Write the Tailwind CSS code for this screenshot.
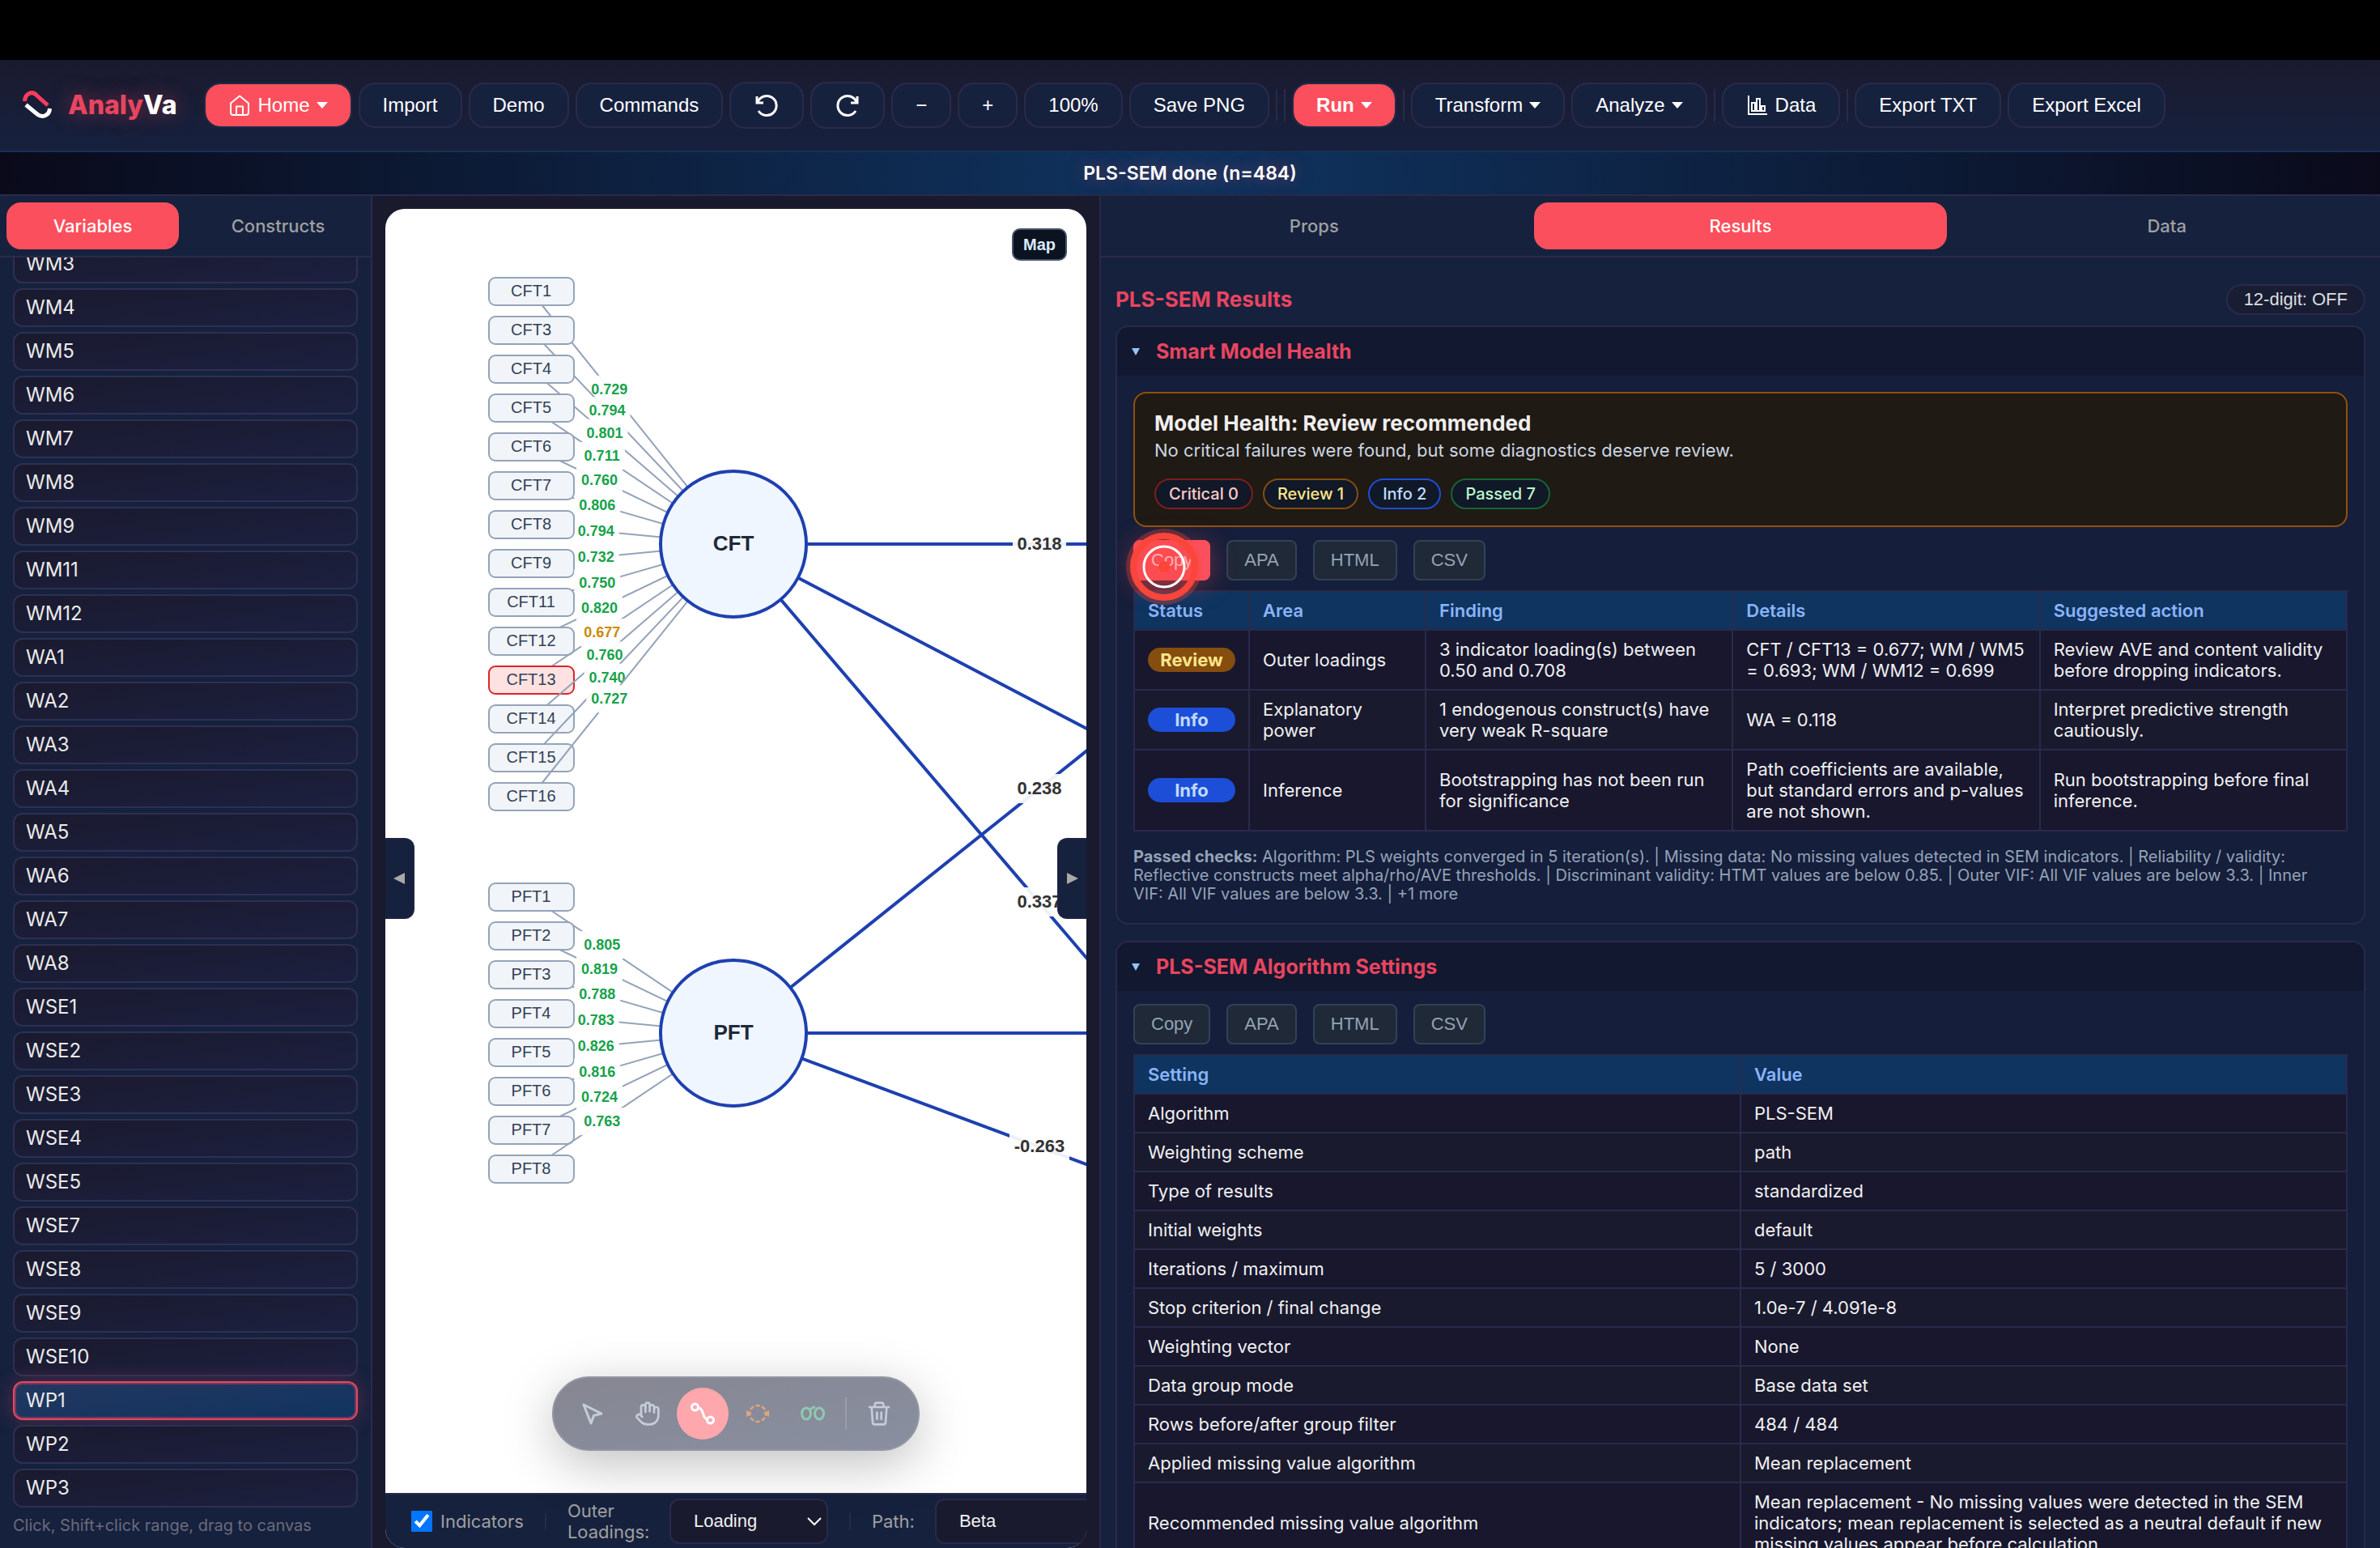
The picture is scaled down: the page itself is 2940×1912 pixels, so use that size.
<!DOCTYPE html>
<html lang="en">

<head>
    <meta charset="UTF-8">
    <meta name="viewport" content="width=device-width, initial-scale=1.0">
    <script src="https://cdn.jsdelivr.net/npm/@tailwindcss/browser@4"></script>
    <title>AnalyVa</title>
</head>

<body class="flex flex-col h-screen overflow-hidden bg-[#1a1a2e] text-[#eaeaea] font-[Inter,sans-serif] text-[22px] leading-[26px]">

    <div class="h-[74px] shrink-0 bg-black"></div>

    <!-- top toolbar -->
    <header class="h-[112px] shrink-0 flex items-center gap-2 pl-7 pr-6 bg-linear-to-b from-[#1a1a2e] to-[#16213e] font-['Liberation_Sans',sans-serif] text-2xl leading-7 text-white">

        <a href="#" class="flex items-center gap-5 mr-[26px] font-[Inter,sans-serif] text-[32px] font-extrabold">
            <svg class="w-9 h-9" viewBox="0 0 36 36" fill="none" stroke-width="5">
                <path stroke="#ff3b5f" d="M2.5 13C3 3 12 0 17 5.500L31 18" />
                <path stroke="#fff" d="M4 17.5L18 29C24 34 33 31 33.5 22" />
            </svg>
            <span class="text-[#e94560] [text-shadow:0_0_24px_rgba(233,69,96,0.5)]">Analy<span class="text-white">Va</span></span>
        </a>

        <button class="h-14 px-7 border-2 border-[#1f2a47] rounded-[20px] bg-[#fb4f5d] bg-clip-padding flex items-center gap-2">
            <svg class="w-7 h-7" viewBox="0 0 28 28" fill="none" stroke="currentColor" stroke-width="2" stroke-linejoin="round">
                <path d="M3 11.5L14 2.5l11 9V23a3 3 0 0 1-3 3H6a3 3 0 0 1-3-3z" />
                <path d="M10 26V15.5h8V26" />
            </svg>
            <span>Home</span>
            <svg class="w-3.5 h-2" viewBox="0 0 14 8" fill="currentColor"><path d="M0 0h14L7 8z" /></svg>
        </button>
        <button class="h-14 px-7 border-2 border-[#2a2a4a] rounded-[20px] bg-[#16213e]">Import</button>
        <button class="h-14 px-7 border-2 border-[#2a2a4a] rounded-[20px] bg-[#16213e]">Demo</button>
        <button class="h-14 px-7 border-2 border-[#2a2a4a] rounded-[20px] bg-[#16213e]">Commands</button>
        <button aria-label="Undo" class="h-[58px] px-7 border-2 border-[#2a2a4a] rounded-[20px] bg-[#16213e]">
            <svg class="w-8 h-8" viewBox="0 0 32 32" fill="none" stroke="currentColor" stroke-width="3">
                <path d="M4 5v8h8" />
                <path d="M5 12A12 12 0 1 1 6 23" />
            </svg>
        </button>
        <button aria-label="Redo" class="h-[58px] px-7 border-2 border-[#2a2a4a] rounded-[20px] bg-[#16213e]">
            <svg class="w-8 h-8" viewBox="0 0 32 32" fill="none" stroke="currentColor" stroke-width="3">
                <path d="M28 5v8h-8" />
                <path d="M27 12A12 12 0 1 0 26 23" />
            </svg>
        </button>
        <button class="h-14 px-7 border-2 border-[#2a2a4a] rounded-[20px] bg-[#16213e]">−</button>
        <button class="h-14 px-7 border-2 border-[#2a2a4a] rounded-[20px] bg-[#16213e]">+</button>
        <button class="h-14 px-7 border-2 border-[#2a2a4a] rounded-[20px] bg-[#16213e]">100%</button>
        <button class="h-14 px-7 border-2 border-[#2a2a4a] rounded-[20px] bg-[#16213e]">Save PNG</button>
        <div class="w-0.5 h-10 bg-[#2a2a4a]"></div>
        <div class="w-0.5 h-10 bg-[#2a2a4a]"></div>
        <button class="h-14 px-7 border-2 border-[#1f2a47] rounded-[20px] bg-[#fb4f5d] bg-clip-padding flex items-center gap-2 font-bold">
            <span>Run</span>
            <svg class="w-3.5 h-2" viewBox="0 0 14 8" fill="currentColor"><path d="M0 0h14L7 8z" /></svg>
        </button>
        <div class="w-0.5 h-10 bg-[#2a2a4a]"></div>
        <button class="h-14 px-7 border-2 border-[#2a2a4a] rounded-[20px] bg-[#16213e] flex items-center gap-2">
            <span>Transform</span>
            <svg class="w-3.5 h-2" viewBox="0 0 14 8" fill="currentColor"><path d="M0 0h14L7 8z" /></svg>
        </button>
        <button class="h-14 px-7 border-2 border-[#2a2a4a] rounded-[20px] bg-[#16213e] flex items-center gap-2">
            <span>Analyze</span>
            <svg class="w-3.5 h-2" viewBox="0 0 14 8" fill="currentColor"><path d="M0 0h14L7 8z" /></svg>
        </button>
        <div class="w-0.5 h-10 bg-[#2a2a4a]"></div>
        <button class="h-14 px-7 border-2 border-[#2a2a4a] rounded-[20px] bg-[#16213e] flex items-center gap-2">
            <svg class="w-7 h-7" viewBox="0 0 28 28" fill="none" stroke="currentColor" stroke-width="2">
                <path d="M3 2v23h23" />
                <path d="M7 11h4v10H7zM13 6h4v15h-4zM19 15h4v6h-4z" />
            </svg>
            <span>Data</span>
        </button>
        <div class="w-0.5 h-10 bg-[#2a2a4a]"></div>
        <button class="h-14 px-7 border-2 border-[#2a2a4a] rounded-[20px] bg-[#16213e]">Export TXT</button>
        <button class="h-14 px-7 border-2 border-[#2a2a4a] rounded-[20px] bg-[#16213e]">Export Excel</button>
    </header>

    <!-- status line -->
    <div class="h-14 shrink-0 flex items-center justify-center border-y-2 border-t-[#1b2f52] border-b-[#2a2a4a] bg-[linear-gradient(90deg,#0a0a1a,#0f3460_50%,#0a0a1a)] text-white text-[23px] font-semibold [text-shadow:0_0_20px_rgba(233,69,96,0.5)]">
        PLS-SEM done (n=484)
    </div>

    <main class="flex-1 min-h-0 flex">

        <!-- variables -->
        <aside class="w-[460px] shrink-0 flex flex-col bg-[#16213e] border-r-2 border-[#2a2a4a]">
            <div class="flex gap-4 p-2 border-b-2 border-[#2a2a4a]">
                <button class="flex-1 h-[58px] rounded-[18px] bg-[#fb4f5d] text-white font-medium">Variables</button>
                <button class="flex-1 h-[58px] rounded-[18px] text-[#a0a0a0] font-medium">Constructs</button>
            </div>
            <div class="flex-1 min-h-0 overflow-hidden px-4">
                <ul id="variables" class="flex flex-col gap-1.5 -mt-4"></ul>
                <p class="mt-2 text-xl text-[#6b6b7b]">Click, Shift+click range, drag to canvas</p>
            </div>
        </aside>

        <!-- canvas -->
        <section class="w-[898px] shrink-0 pt-4 px-4">
            <div class="relative h-full flex flex-col rounded-3xl overflow-hidden bg-white">
                <div class="relative flex-1 min-h-0">
                    <svg id="diagram" class="absolute inset-0 w-full h-full font-['Liberation_Sans',sans-serif]"></svg>

                    <button class="absolute top-6 right-6 h-10 px-3 border-2 border-[#475569] rounded-[10px] bg-[#0b1220] text-[#dbeafe] font-['Liberation_Sans',sans-serif] text-xl font-bold">Map</button>

                    <div class="absolute bottom-[52px] left-1/2 -translate-x-1/2 flex items-center gap-1 h-[92px] px-4 rounded-full border-2 border-[#9495a4] bg-linear-to-br from-[#868691] to-[#888fa0] shadow-[0_16px_64px_rgba(0,0,0,0.25)] text-[#c5ccda]">
                        <button aria-label="Select" class="size-16 flex items-center justify-center">
                            <svg class="size-8" viewBox="0 0 32 32" fill="none" stroke="currentColor" stroke-width="3" stroke-linejoin="round"><path d="M5 5l22 11-9.5 2.5L14 28z" /></svg>
                        </button>
                        <button aria-label="Pan" class="size-16 flex items-center justify-center">
                            <svg class="size-8" viewBox="0 0 24 24" fill="none" stroke="currentColor" stroke-width="2" stroke-linecap="round" stroke-linejoin="round">
                                <path d="M18 11V6a2 2 0 0 0-4 0" />
                                <path d="M14 10V4a2 2 0 0 0-4 0v2" />
                                <path d="M10 10.5V6a2 2 0 0 0-4 0v8" />
                                <path d="M18 8a2 2 0 1 1 4 0v6a8 8 0 0 1-8 8h-2c-2.8 0-4.5-.86-5.99-2.34l-3.6-3.6a2 2 0 0 1 2.83-2.82L7 15" />
                            </svg>
                        </button>
                        <button aria-label="Path" class="size-16 flex items-center justify-center rounded-full bg-[#fea7ad] text-white">
                            <svg class="size-8" viewBox="0 0 32 32" fill="none" stroke="currentColor" stroke-width="3">
                                <circle cx="6.5" cy="8" r="4" />
                                <circle cx="25.5" cy="24" r="4" />
                                <path d="M10.5 9C18 9 15 22 21.5 23" />
                            </svg>
                        </button>
                        <button aria-label="Moderation" class="size-16 flex items-center justify-center text-[#dda57e]">
                            <svg class="size-8" viewBox="0 0 32 32" fill="none" stroke="currentColor" stroke-width="2.5">
                                <circle cx="16" cy="16" r="10" pathLength="80" stroke-dasharray="7 3" stroke-dashoffset="3.5" />
                                <path d="M3 13.5l4 2.500-4 2.500zM29 13.5l-4 2.500 4 2.500z" fill="currentColor" stroke-width="2" />
                            </svg>
                        </button>
                        <button aria-label="Covariance" class="size-16 flex items-center justify-center text-[#8fc9b0]">
                            <svg class="size-8" viewBox="0 0 32 32" fill="none" stroke="currentColor" stroke-width="3">
                                <ellipse cx="8" cy="16" rx="5.5" ry="7" />
                                <ellipse cx="24" cy="16" rx="5.5" ry="7" />
                                <path d="M12 12q3-4 7-4" />
                            </svg>
                        </button>
                        <div class="w-0.5 h-10 mx-1 bg-[#9a9ca9]"></div>
                        <button aria-label="Delete" class="size-16 flex items-center justify-center">
                            <svg class="size-8" viewBox="0 0 24 24" fill="none" stroke="currentColor" stroke-width="2" stroke-linecap="round" stroke-linejoin="round">
                                <path d="M3 6h18M19 6l-1 14a2 2 0 0 1-2 2H8a2 2 0 0 1-2-2L5 6M8 6V4a2 2 0 0 1 2-2h4a2 2 0 0 1 2 2v2M10 11v6M14 11v6" />
                            </svg>
                        </button>
                    </div>
                </div>

                <div class="h-[68px] shrink-0 flex items-center border-t-2 border-[#2a2a4a] bg-[#16213e] pl-8 text-[#a0a0a0]">
                    <label class="flex items-center gap-2.5">
                        <input type="checkbox" checked class="size-[26px] accent-[#0075ff]">
                        Indicators
                    </label>
                    <div class="w-0.5 h-5 shrink-0 mx-[26px] bg-[#2a2a4a]"></div>
                    <label for="loadings" class="w-[126px] shrink-0">Outer Loadings:</label>
                    <div class="relative shrink-0">
                        <select id="loadings" class="appearance-none w-[196px] h-14 pl-7 border-2 border-[#2a2a4a] rounded-xl bg-[#1a1a2e] text-[#f0f0f0] font-['Liberation_Sans',sans-serif]">
                            <option>Loading</option>
                        </select>
                        <svg class="absolute right-2 top-5 w-[18px] h-4 pointer-events-none text-white" viewBox="0 0 18 16" fill="none" stroke="currentColor" stroke-width="2"><path d="M1 4l8 8 8-8" /></svg>
                    </div>
                    <div class="w-0.5 h-5 shrink-0 mx-[26px] bg-[#2a2a4a]"></div>
                    <label for="path" class="w-[78px] shrink-0">Path:</label>
                    <select id="path" class="appearance-none shrink-0 w-[240px] h-14 pl-7 border-2 border-[#2a2a4a] rounded-xl bg-[#1a1a2e] text-[#f0f0f0] font-['Liberation_Sans',sans-serif]">
                        <option>Beta</option>
                    </select>
                </div>

                <button aria-label="Collapse left panel" class="absolute left-0 top-1/2 -translate-y-1/2 w-9 h-[100px] flex items-center justify-center rounded-r-xl border-2 border-l-0 border-[#1d2442] bg-[#16213e] text-[#a9a9a9]">
                    <svg class="w-3.5 h-3.5" viewBox="0 0 14 14" fill="currentColor"><path d="M14 0v14L0 7z" /></svg>
                </button>
                <button aria-label="Collapse right panel" class="absolute right-0 top-1/2 -translate-y-1/2 w-9 h-[100px] flex items-center justify-center rounded-l-xl border-2 border-r-0 border-[#1d2442] bg-[#16213e] text-[#a9a9a9]">
                    <svg class="w-3.5 h-3.5" viewBox="0 0 14 14" fill="currentColor"><path d="M0 0v14l14-7z" /></svg>
                </button>
            </div>
        </section>

        <!-- results -->
        <section class="flex-1 min-w-0 flex flex-col bg-[#16213e] border-l-2 border-[#2a2a4a]">
            <div class="shrink-0 flex gap-4 p-2 border-b-2 border-[#2a2a4a]">
                <button class="flex-1 h-[58px] rounded-[18px] text-[#a0a0a0] font-medium">Props</button>
                <button class="flex-1 h-[58px] rounded-[18px] bg-[#fb4f5d] text-white font-medium">Results</button>
                <button class="flex-1 h-[58px] rounded-[18px] text-[#a0a0a0] font-medium">Data</button>
            </div>

            <div class="flex-1 min-h-0 overflow-hidden px-[18px]">
                <div class="h-[84px] pt-5 flex items-center justify-between">
                    <h2 class="text-[26px] font-bold text-[#e94560]">PLS-SEM Results</h2>
                    <button class="h-[38px] px-5 border-2 border-[#2a2a4a] rounded-full bg-[#1a1a2e]/60 text-[#dddddd] font-['Liberation_Sans',sans-serif]">12-digit: OFF</button>
                </div>

                <article class="rounded-2xl border-2 border-[#2a2a4a] bg-[#151e3a] overflow-hidden">
                    <h3 class="h-[60px] flex items-center gap-5 px-[18px] bg-[#12182f] text-[25px] font-bold text-[#e94560]">
                        <svg class="w-2.5 h-2.5" viewBox="0 0 10 10" fill="#93c5fd"><path d="M0 1h10L5 10z" /></svg>
                        Smart Model Health
                    </h3>
                    <div class="px-5 pt-5 pb-6">
                        <div class="rounded-2xl border-2 border-[#92500e] bg-[#1f1a14] px-6 py-5">
                            <h4 class="text-[26px] leading-[33px] font-bold text-[#f0eeee]">Model Health: Review recommended</h4>
                            <p class="mt-1 text-[#cbd5e1]">No critical failures were found, but some diagnostics deserve review.</p>
                            <div class="mt-[22px] flex gap-3 text-xl leading-[34px] font-medium">
                                <span class="px-4 rounded-full border-2 border-[#7f1d1d] bg-[#111827] text-[#fecaca]">Critical 0</span>
                                <span class="px-4 rounded-full border-2 border-[#854d0e] bg-[#111827] text-[#fde68a]">Review 1</span>
                                <span class="px-4 rounded-full border-2 border-[#1d4ed8] bg-[#111827] text-[#bfdbfe]">Info 2</span>
                                <span class="px-4 rounded-full border-2 border-[#166534] bg-[#111827] text-[#bbf7d0]">Passed 7</span>
                            </div>
                        </div>

                        <div class="mt-4 mb-3 flex gap-5 font-['Liberation_Sans',sans-serif] text-[#94a3b8]">
                            <button class="relative h-[50px] px-5 border-2 border-[#fb4f5d] rounded-lg bg-[#fb4f5d] text-white/80 shadow-[0_4px_32px_rgba(251,79,93,0.4)]">
                                Copy
                                <!-- click ripple -->
                                <svg class="absolute -left-[14px] -top-[19px] size-[100px] overflow-visible pointer-events-none" viewBox="0 0 100 100" fill="none">
                                    <circle cx="50" cy="50" r="47" fill="#ff4438" fill-opacity=".3" />
                                    <circle cx="50" cy="50" r="38" stroke="#fa453b" stroke-width="8" />
                                    <circle cx="50" cy="50" r="25" stroke="#fff" stroke-width="3" />
                                    <circle cx="50" cy="50" r="7" fill="#ff4438" />
                                </svg>
                            </button>
                            <button class="h-[50px] px-5 border-2 border-[#334155] rounded-lg bg-[#1f2937]">APA</button>
                            <button class="h-[50px] px-5 border-2 border-[#334155] rounded-lg bg-[#1f2937]">HTML</button>
                            <button class="h-[50px] px-5 border-2 border-[#334155] rounded-lg bg-[#1f2937]">CSV</button>
                        </div>

                        <table class="w-full table-fixed border-collapse text-left text-[#f0f0f0]">
                            <thead class="bg-[#0f3460] text-[#8ab4f8]">
                                <tr>
                                    <th class="w-[142px] border-2 border-[#2a2a4a] px-4 py-2.5 font-semibold">Status</th>
                                    <th class="w-[218px] border-2 border-[#2a2a4a] px-4 py-2.5 font-semibold">Area</th>
                                    <th class="border-2 border-[#2a2a4a] px-4 py-2.5 font-semibold">Finding</th>
                                    <th class="border-2 border-[#2a2a4a] px-4 py-2.5 font-semibold">Details</th>
                                    <th class="border-2 border-[#2a2a4a] px-4 py-2.5 font-semibold">Suggested action</th>
                                </tr>
                            </thead>
                            <tbody>
                                <tr class="bg-[#18172e]">
                                    <td class="border-2 border-[#2a2a4a] px-4 py-2.5"><span class="block rounded-full bg-[#854d0e] text-center leading-[30px] font-bold text-[#fde68a]">Review</span></td>
                                    <td class="border-2 border-[#2a2a4a] px-4 py-2.5">Outer loadings</td>
                                    <td class="border-2 border-[#2a2a4a] px-4 py-2.5">3 indicator loading(s) between 0.50 and 0.708</td>
                                    <td class="border-2 border-[#2a2a4a] px-4 py-2.5">CFT / CFT13 = 0.677; WM / WM5 = 0.693; WM / WM12 = 0.699</td>
                                    <td class="border-2 border-[#2a2a4a] px-4 py-2.5">Review AVE and content validity before dropping indicators.</td>
                                </tr>
                                <tr class="bg-[#1a1a2e]">
                                    <td class="border-2 border-[#2a2a4a] px-4 py-2.5"><span class="block rounded-full bg-[#1d4ed8] text-center leading-[30px] font-bold text-[#bfdbfe]">Info</span></td>
                                    <td class="border-2 border-[#2a2a4a] px-4 py-2.5">Explanatory power</td>
                                    <td class="border-2 border-[#2a2a4a] px-4 py-2.5">1 endogenous construct(s) have very weak R-square</td>
                                    <td class="border-2 border-[#2a2a4a] px-4 py-2.5">WA = 0.118</td>
                                    <td class="border-2 border-[#2a2a4a] px-4 py-2.5">Interpret predictive strength cautiously.</td>
                                </tr>
                                <tr class="bg-[#18172e]">
                                    <td class="border-2 border-[#2a2a4a] px-4 py-2.5"><span class="block rounded-full bg-[#1d4ed8] text-center leading-[30px] font-bold text-[#bfdbfe]">Info</span></td>
                                    <td class="border-2 border-[#2a2a4a] px-4 py-2.5">Inference</td>
                                    <td class="border-2 border-[#2a2a4a] px-4 py-2.5">Bootstrapping has not been run for significance</td>
                                    <td class="border-2 border-[#2a2a4a] px-4 py-2.5">Path coefficients are available, but standard errors and p-values are not shown.</td>
                                    <td class="border-2 border-[#2a2a4a] px-4 py-2.5">Run bootstrapping before final inference.</td>
                                </tr>
                            </tbody>
                        </table>

                        <p class="mt-5 pr-4 text-xl leading-[23px] text-[#94a3b8]"><b>Passed checks:</b> Algorithm: PLS weights converged in 5 iteration(s). | Missing data: No missing values detected in SEM indicators. | Reliability / validity: Reflective constructs meet alpha/rho/AVE thresholds. | Discriminant validity: HTMT values are below 0.85. | Outer VIF: All VIF values are below 3.3. | Inner VIF: All VIF values are below 3.3. | +1 more</p>
                    </div>
                </article>

                <article class="mt-5 rounded-2xl border-2 border-[#2a2a4a] bg-[#151e3a] overflow-hidden">
                    <h3 class="h-[60px] flex items-center gap-5 px-[18px] bg-[#12182f] text-[25px] font-bold text-[#e94560]">
                        <svg class="w-2.5 h-2.5" viewBox="0 0 10 10" fill="#93c5fd"><path d="M0 1h10L5 10z" /></svg>
                        PLS-SEM Algorithm Settings
                    </h3>
                    <div class="px-5 pt-4 pb-6">
                        <div class="mb-3 flex gap-5 font-['Liberation_Sans',sans-serif] text-[#94a3b8]">
                            <button class="h-[50px] px-5 border-2 border-[#334155] rounded-lg bg-[#1f2937]">Copy</button>
                            <button class="h-[50px] px-5 border-2 border-[#334155] rounded-lg bg-[#1f2937]">APA</button>
                            <button class="h-[50px] px-5 border-2 border-[#334155] rounded-lg bg-[#1f2937]">HTML</button>
                            <button class="h-[50px] px-5 border-2 border-[#334155] rounded-lg bg-[#1f2937]">CSV</button>
                        </div>
                        <table class="w-full table-fixed border-collapse text-left text-[#f0f0f0]">
                            <thead class="bg-[#0f3460] text-[#8ab4f8]">
                                <tr>
                                    <th class="border-2 border-[#2a2a4a] px-4 py-2.5 font-semibold">Setting</th>
                                    <th class="border-2 border-[#2a2a4a] px-4 py-2.5 font-semibold">Value</th>
                                </tr>
                            </thead>
                            <tbody id="settings"></tbody>
                        </table>
                    </div>
                </article>
            </div>
        </section>
    </main>

    <script>
        // variable list
        const variables = ['WM3', 'WM4', 'WM5', 'WM6', 'WM7', 'WM8', 'WM9', 'WM11', 'WM12',
            'WA1', 'WA2', 'WA3', 'WA4', 'WA5', 'WA6', 'WA7', 'WA8',
            'WSE1', 'WSE2', 'WSE3', 'WSE4', 'WSE5', 'WSE7', 'WSE8', 'WSE9', 'WSE10', 'WP1', 'WP2', 'WP3']
        const selected = 'WP1'

        document.getElementById('variables').innerHTML = variables.map(name => {
            const look = name === selected
                ? 'border-[#e94560] from-[#22375f] to-[#0f3460] shadow-[0_0_24px_rgba(233,69,96,0.3),inset_0_0_0_2px_rgba(233,69,96,0.4)]'
                : 'border-[#2e3052] from-[#1a1a2e] to-[#1c2040]'
            return `<li class="h-12 px-3.5 flex items-center rounded-xl border-2 bg-linear-to-br text-2xl ${look}">${name}</li>`
        }).join('')

        // algorithm settings table
        const settings = [
            ['Algorithm', 'PLS-SEM'],
            ['Weighting scheme', 'path'],
            ['Type of results', 'standardized'],
            ['Initial weights', 'default'],
            ['Iterations / maximum', '5 / 3000'],
            ['Stop criterion / final change', '1.0e-7 / 4.091e-8'],
            ['Weighting vector', 'None'],
            ['Data group mode', 'Base data set'],
            ['Rows before/after group filter', '484 / 484'],
            ['Applied missing value algorithm', 'Mean replacement'],
            ['Recommended missing value algorithm', 'Mean replacement - No missing values were detected in the SEM indicators; mean replacement is selected as a neutral default if new missing values appear before calculation.'],
        ]

        document.getElementById('settings').innerHTML = settings.map(([key, value]) => `
            <tr class="odd:bg-[#18172e] even:bg-[#1a1a2e]">
                <td class="border-2 border-[#2a2a4a] px-4 py-2.5">${key}</td>
                <td class="border-2 border-[#2a2a4a] px-4 py-2.5">${value}</td>
            </tr>`).join('')

        // model diagram
        const R = 90
        const constructs = [
            {
                name: 'CFT', x: 430, y: 414, top: 102,
                items: [['CFT1', '0.729'], ['CFT3', '0.794'], ['CFT4', '0.801'], ['CFT5', '0.711'], ['CFT6', '0.760'],
                ['CFT7', '0.806'], ['CFT8', '0.794'], ['CFT9', '0.732'], ['CFT11', '0.750'], ['CFT12', '0.820'],
                ['CFT13', '0.677'], ['CFT14', '0.760'], ['CFT15', '0.740'], ['CFT16', '0.727']]
            },
            {
                name: 'PFT', x: 430, y: 1018, top: 850,
                items: [['PFT1', '0.805'], ['PFT2', '0.819'], ['PFT3', '0.788'], ['PFT4', '0.783'],
                ['PFT5', '0.826'], ['PFT6', '0.816'], ['PFT7', '0.724'], ['PFT8', '0.763']]
            },
        ]
        // from x, from y, to x, to y, label, label y
        const paths = [
            [430, 414, 1186, 414, '0.318', 414],
            [430, 414, 1186, 809],
            [430, 414, 1186, 1300, '0.337', 856],
            [430, 1018, 1186, 414, '0.238', 716],
            [430, 1018, 1186, 1018],
            [430, 1018, 1186, 1299, '-0.263', 1158],
        ]

        const label = (x, y, text, size, w, h, color) => `
            <rect x="${x - w / 2}" y="${y - h / 2}" width="${w}" height="${h}" fill="#fff" fill-opacity=".92" />
            <text x="${x}" y="${y + size / 3}" font-size="${size}" font-weight="bold" text-anchor="middle" fill="${color}">${text}</text>`

        let svg = ''
        for (const [x1, y1, x2, y2, text, ly] of paths) {
            svg += `<line x1="${x1}" y1="${y1}" x2="${x2}" y2="${y2}" stroke="#1e40af" stroke-width="4" />`
            if (text) svg += label(808, ly, text, 22, text.length > 5 ? 74 : 66, 36, '#333')
        }
        for (const c of constructs) {
            c.items.forEach(([name, loading], i) => {
                const x = 180, y = c.top + i * 48
                const dx = c.x - x, dy = c.y - y
                const t = (1 - R / Math.hypot(dx, dy)) / 2
                const weak = Number(loading) < 0.7
                svg += `<line x1="${x}" y1="${y}" x2="${c.x}" y2="${c.y}" stroke="#94a3b8" stroke-width="2" />`
                svg += label(x + dx * t, y + dy * t, loading, 18, 57, 34, weak ? '#ca8a04' : '#16a34a')
                svg += `<rect x="${x - 52}" y="${y - 17}" width="105" height="34" rx="8" fill="${weak ? '#fee2e2' : '#f1f5f9'}" stroke="${weak ? '#dc2626' : '#94a3b8'}" stroke-width="2" />
                    <text x="${x}" y="${y + 6}" font-size="20" text-anchor="middle" fill="#334155">${name}</text>`
            })
            svg += `<circle cx="${c.x}" cy="${c.y}" r="${R}" fill="#eff6ff" stroke="#1e40af" stroke-width="4" />
                <text x="${c.x}" y="${c.y + 8}" font-size="26" font-weight="bold" text-anchor="middle" fill="#1e293b">${c.name}</text>`
        }
        document.getElementById('diagram').innerHTML = svg
    </script>

</body>

</html>
